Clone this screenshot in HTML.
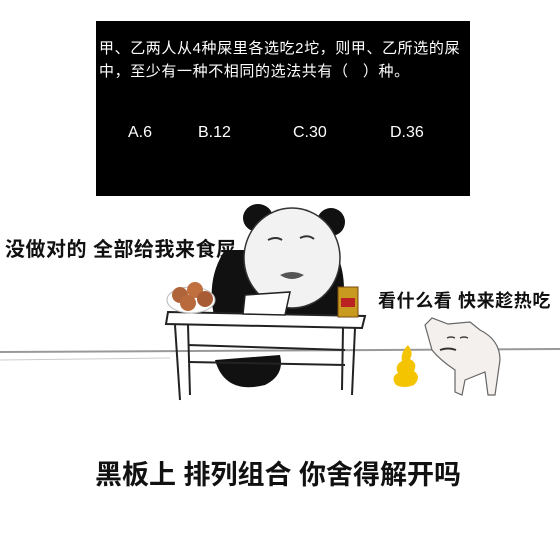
<!DOCTYPE html>
<html><head><meta charset="utf-8"><style>
body{margin:0;width:560px;height:560px;background:#fff;position:relative;overflow:hidden;font-family:"Liberation Sans","Noto Sans CJK SC",sans-serif}
.t{position:absolute;white-space:nowrap}
#bb{position:absolute;left:96px;top:21px;width:374px;height:175px;background:#000}
.w{color:#fff;font-size:15px}
.b{font-weight:bold;color:#111}
</style></head><body>
<div id="bb"></div>
<div class="t w" style="left:99px;top:37px;letter-spacing:0.6px">甲、乙两人从4种屎里各选吃2坨，则甲、乙所选的屎</div>
<div class="t w" style="left:99px;top:60px;letter-spacing:0.6px">中，至少有一种不相同的选法共有（&nbsp;&nbsp;&nbsp;）种。</div>
<div class="t w" style="left:128px;top:124px;font-size:16px">A.6</div>
<div class="t w" style="left:198px;top:124px;font-size:16px">B.12</div>
<div class="t w" style="left:293px;top:124px;font-size:16px">C.30</div>
<div class="t w" style="left:390px;top:124px;font-size:16px">D.36</div>

<svg style="position:absolute;left:0;top:0" width="560" height="560">
<line x1="0" y1="352" x2="560" y2="349" stroke="#999" stroke-width="2"/>
<line x1="0" y1="360" x2="170" y2="358" stroke="#ccc" stroke-width="1"/>
<path d="M225 250 Q205 280 215 320 L340 320 Q350 280 335 250 Z" fill="#111"/>
<path d="M215 360 Q225 395 265 385 Q285 375 280 355 Z" fill="#111"/>
<ellipse cx="258" cy="218" rx="15" ry="14" fill="#111"/>
<ellipse cx="331" cy="222" rx="14" ry="14" fill="#111"/>
<ellipse cx="292" cy="258" rx="48" ry="50" fill="#f2f2f2" stroke="#333" stroke-width="1.5"/>
<path d="M268 240 q8 -4 14 0 M300 238 q8 -4 14 1" stroke="#333" stroke-width="2" fill="none"/>
<path d="M280 275 q12 -6 24 0 q-12 8 -24 0" fill="#555"/>
<path d="M168 312 L365 316 L362 328 L166 324 Z" fill="#fff" stroke="#222" stroke-width="2"/>
<path d="M175 325 L180 400 M188 325 L190 395 M355 328 L352 395 M343 328 L342 390 M188 345 L345 350 M188 362 L345 365" stroke="#222" stroke-width="2" fill="none"/>
<path d="M245 295 L290 292 L285 315 L243 314 Z" fill="#fff" stroke="#222" stroke-width="1.5"/>
<ellipse cx="191" cy="300" rx="24" ry="13" fill="#fff" stroke="#bbb"/>
<circle cx="180" cy="295" r="8" fill="#b0643a"/><circle cx="195" cy="290" r="8" fill="#c0703f"/><circle cx="205" cy="299" r="8" fill="#a85c36"/><circle cx="188" cy="303" r="8" fill="#b86a3c"/>
<rect x="338" y="287" width="20" height="30" fill="#c89a20" stroke="#7a4a10"/>
<rect x="341" y="298" width="14" height="9" fill="#b22"/>
<path d="M408 345 q6 8 2 14 q8 4 4 12 q8 6 0 14 q-10 4 -18 0 q-6 -8 2 -12 q-4 -8 4 -12 q-2 -8 6 -16 Z" fill="#f5c400"/>
<path d="M425 325 L432 318 L448 324 L470 322 L480 330 Q500 340 500 360 L495 395 L488 395 L485 372 L465 380 L462 395 L455 392 L455 370 Q440 360 432 350 Z" fill="#f4f0ee" stroke="#666" stroke-width="1.2"/>
<path d="M440 350 q8 -3 16 0" stroke="#333" stroke-width="2" fill="none"/>
<path d="M447 338 q4 -2 8 0 M460 338 q4 -2 8 0" stroke="#444" stroke-width="1.5" fill="none"/>
</svg>

<div class="t b" style="left:5px;top:233px;font-size:20px;letter-spacing:0.5px">没做对的 全部给我来食屎</div>
<div class="t b" style="left:378px;top:287px;font-size:18px;letter-spacing:0.6px">看什么看 快来趁热吃</div>
<div class="t b" style="left:95px;top:453px;font-size:27px">黑板上 排列组合 你舍得解开吗</div>
</body></html>
